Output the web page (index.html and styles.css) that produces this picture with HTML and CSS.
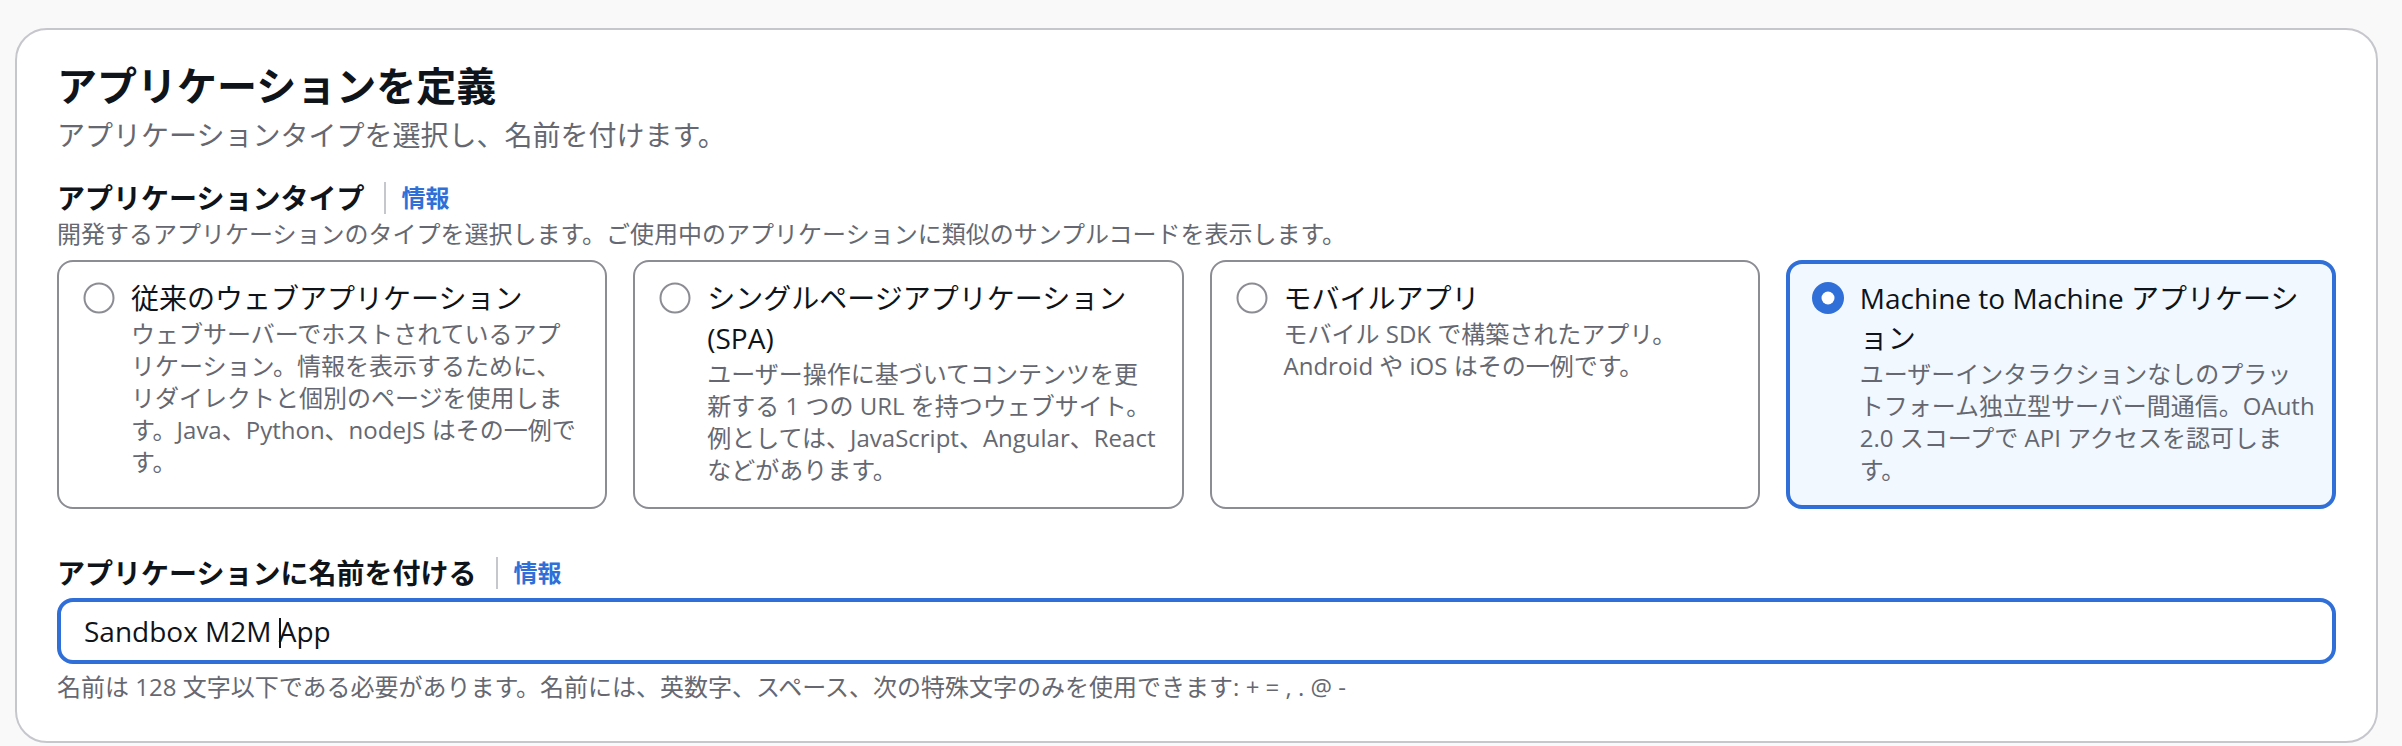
FILE: index.html
```html
<!DOCTYPE html>
<html lang="ja">
<head>
<meta charset="utf-8">
<title>アプリケーションを定義</title>
<link rel="stylesheet" href="styles.css">
</head>
<body>
<section class="container">
  <header class="header">
    <h2 class="title">アプリケーションを定義</h2>
    <p class="subtitle">アプリケーションタイプを選択し、名前を付けます。</p>
  </header>

  <div class="field">
    <div class="label-row">
      <span class="label">アプリケーションタイプ</span>
      <span class="divider"></span>
      <a class="info" href="#">情報</a>
    </div>
    <p class="field-desc">開発するアプリケーションのタイプを選択します。ご使用中のアプリケーションに類似のサンプルコードを表示します。</p>

    <div class="tiles">
      <div class="tile">
        <svg class="radio" viewBox="0 0 32 32" width="32" height="32"><circle cx="16" cy="16" r="14.5" fill="#fff" stroke="#8c8c94" stroke-width="2"/></svg>
        <div class="tile-body">
          <div class="tile-title">従来のウェブアプリケーション</div>
          <div class="tile-desc">ウェブサーバーでホストされているアプ<br>リケーション。情報を表示するために、<br>リダイレクトと個別のページを使用しま<br>す。Java、Python、nodeJS はその一例で<br>す。</div>
        </div>
      </div>
      <div class="tile">
        <svg class="radio" viewBox="0 0 32 32" width="32" height="32"><circle cx="16" cy="16" r="14.5" fill="#fff" stroke="#8c8c94" stroke-width="2"/></svg>
        <div class="tile-body">
          <div class="tile-title">シングルページアプリケーション (SPA)</div>
          <div class="tile-desc">ユーザー操作に基づいてコンテンツを更<br>新する 1 つの URL を持つウェブサイト。<br>例としては、JavaScript、Angular、React<br>などがあります。</div>
        </div>
      </div>
      <div class="tile">
        <svg class="radio" viewBox="0 0 32 32" width="32" height="32"><circle cx="16" cy="16" r="14.5" fill="#fff" stroke="#8c8c94" stroke-width="2"/></svg>
        <div class="tile-body">
          <div class="tile-title">モバイルアプリ</div>
          <div class="tile-desc">モバイル SDK で構築されたアプリ。<br>Android や iOS はその一例です。</div>
        </div>
      </div>
      <div class="tile tile-selected">
        <svg class="radio" viewBox="0 0 32 32" width="32" height="32"><circle cx="16" cy="16" r="16" fill="#306fd8"/><circle cx="16" cy="16" r="6.5" fill="#fff"/></svg>
        <div class="tile-body">
          <div class="tile-title">Machine to Machine アプリケーション</div>
          <div class="tile-desc">ユーザーインタラクションなしのプラッ<br>トフォーム独立型サーバー間通信。OAuth<br>2.0 スコープで API アクセスを認可しま<br>す。</div>
        </div>
      </div>
    </div>
  </div>

  <div class="field field-name">
    <div class="label-row">
      <span class="label">アプリケーションに名前を付ける</span>
      <span class="divider"></span>
      <a class="info" href="#">情報</a>
    </div>
    <div class="input">Sandbox M2M <span class="caret"></span>App</div>
    <p class="hint">名前は 128 文字以下である必要があります。名前には、英数字、スペース、次の特殊文字のみを使用できます: + = , . @ -</p>
  </div>
</section>
</body>
</html>
```

FILE: styles.css
```css
html, body {
  margin: 0;
  padding: 0;
  background: #f9f9fa;
}

body {
  font-family: "Open Sans", "Noto Sans CJK JP", sans-serif;
  color: #0f141a;
}

.container {
  margin: 28px 24px 4px 15px;
  background: #fff;
  border: 2px solid #c6c6cd;
  border-radius: 32px;
  padding: 32px 40px 38px 40px;
}

.title {
  margin: 0;
  font-size: 40px;
  line-height: 48px;
  font-weight: 700;
  color: #0f141a;
}

.subtitle {
  margin: 5px 0 0 0;
  font-size: 28px;
  line-height: 40px;
  color: #656871;
}

.field {
  margin-top: 23px;
}

.label-row {
  display: flex;
  align-items: center;
  height: 40px;
}

.label {
  font-size: 28px;
  line-height: 40px;
  font-weight: 700;
  color: #0f141a;
}

.divider {
  width: 2px;
  height: 32px;
  background: #c6c6cd;
  margin: 0 15px 0 20px;
}

.info {
  font-size: 24px;
  line-height: 40px;
  font-weight: 700;
  color: #306fd8;
  text-decoration: none;
}

.field-desc {
  margin: 0;
  font-size: 24px;
  line-height: 32px;
  color: #656871;
}

.tiles {
  margin-top: 10px;
  display: grid;
  grid-template-columns: repeat(4, 1fr);
  gap: 26px;
}

.tile {
  display: flex;
  align-items: flex-start;
  gap: 16px;
  border: 2px solid #8c8c94;
  border-radius: 16px;
  padding: 16px 12px 21px 24px;
  background: #fff;
}

.tile-selected {
  border: 4px solid #306fd8;
  padding: 14px 10px 19px 22px;
  background: #f1f8ff;
}

.radio {
  flex: none;
  margin-top: 4px;
  display: block;
}

.tile-body {
  flex: 1;
  min-width: 0;
}

.tile-title {
  font-size: 28px;
  line-height: 40px;
  color: #0f141a;
}

.tile-desc {
  font-size: 24px;
  line-height: 32px;
  color: #656871;
}

.field-name {
  margin-top: 44px;
}

.input {
  margin-top: 5px;
  border: 4px solid #306fd8;
  border-radius: 16px;
  padding: 9px 23px;
  font-size: 28px;
  line-height: 40px;
  color: #0f141a;
  white-space: pre;
}

.caret {
  display: inline-block;
  width: 2px;
  height: 30px;
  background: #0f141a;
  vertical-align: -6px;
  margin-right: -2px;
}

.hint {
  margin: 7px 0 0 0;
  font-size: 24px;
  line-height: 32px;
  color: #656871;
}
```
